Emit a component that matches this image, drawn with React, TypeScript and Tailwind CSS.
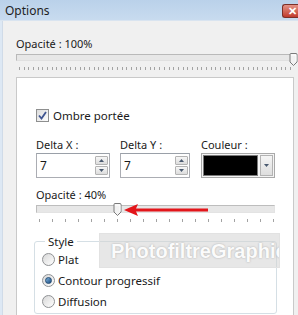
import React from "react";

function Ticks({ count }: { count: number }) {
  return (
    <div className="flex justify-between">
      {Array.from({ length: count }).map((_, i) => (
        <span key={i} className="block w-px h-[3px] bg-[#a3a3a3]" />
      ))}
    </div>
  );
}

function Thumb() {
  return (
    <svg width="9" height="13" viewBox="0 0 9 13" className="block">
      <path d="M1 1.5 Q1 0.5 2 0.5 H7 Q8 0.5 8 1.5 V9 L4.5 12.5 L1 9 Z" fill="#f2f2f2" stroke="#7a7a7a" strokeWidth="1" />
      <path d="M2 2 H7 V8.5" fill="none" stroke="#ffffff" strokeWidth="1" />
    </svg>
  );
}

function SpinButton({ up }: { up: boolean }) {
  return (
    <div className="w-[13px] h-[9px] border border-[#b3b3b3] bg-gradient-to-b from-[#f7f7f7] to-[#dcdcdc] rounded-[1px] flex items-center justify-center">
      <svg width="5" height="3" viewBox="0 0 5 3">
        {up ? <path d="M0 3 L2.5 0 L5 3 Z" fill="#4a5a70" /> : <path d="M0 0 L2.5 3 L5 0 Z" fill="#4a5a70" />}
      </svg>
    </div>
  );
}

function NumberInput({ value, width }: { value: string; width: string }) {
  return (
    <div className={"h-[25px] border border-[#abadb3] border-t-[#9aa0a8] bg-white flex items-center justify-between pl-[3px] pr-[1px] " + width}>
      <span className="text-[12px] text-[#1a1a1a]">{value}</span>
      <div className="flex flex-col gap-[1px]">
        <SpinButton up />
        <SpinButton up={false} />
      </div>
    </div>
  );
}

function Radio({ checked, label }: { checked?: boolean; label: string }) {
  return (
    <div className="h-[21px] flex items-center gap-[3px]">
      <span className="w-[13px] h-[13px] rounded-full border border-[#8f9194] bg-gradient-to-br from-[#d8d8d8] to-[#ffffff] flex items-center justify-center">
        {checked && <span className="w-[7px] h-[7px] rounded-full bg-gradient-to-br from-[#7fb2dd] to-[#1c4f82] border border-[#224a72]" />}
      </span>
      <span className="text-[11.5px] text-[#1a1a1a] leading-[15px]">{label}</span>
    </div>
  );
}

export default function App() {
  return (
    <div className="relative w-[298px] h-[315px] overflow-hidden bg-[#f0f0f0] font-['Noto_Sans',sans-serif] text-[#1a1a1a]">
      {/* Title bar */}
      <div className="h-[21px] bg-gradient-to-b from-[#bad1ea] to-[#c8dbef] flex items-center justify-between pl-[5px] border-b border-[#d9e4f0]">
        <span className="text-[12px] leading-[15px] text-[#1e1e1e]">Options</span>
        <div className="w-[16px] h-[14px] mt-[1px] rounded-l-[3px] border border-r-0 border-[#7d3028] bg-gradient-to-b from-[#e39286] to-[#c0392c] flex items-center pl-[5px] overflow-hidden">
          <span className="text-[11px] leading-none font-bold text-white">✕</span>
        </div>
      </div>

      <div className="flex h-full">
        <div className="w-[3px] bg-[#dde8f4] border-r border-[#d0dbe8]" />

        <div className="flex-1 pl-[13px]">
          <div className="mt-[15px] text-[11px] leading-[15px]">Opacité : 100%</div>

          {/* Slider 1 */}
          <div className="relative mt-[3px]">
            <div className="h-[7px] mr-[6px] bg-[#e7e7e7] border border-[#b9b9b9] border-b-[#e0e0e0] border-r-[#e0e0e0]" />
            <div className="absolute left-[273px] top-[-1px]">
              <Thumb />
            </div>
          </div>
          <div className="mt-[6px] pl-[3px] pr-[7px]">
            <Ticks count={59} />
          </div>

          {/* Panel */}
          <div className="mt-[7px] w-[278px] h-[260px] bg-white border border-[#c9c9c9] pl-[19px]">
            <div className="mt-[30px] flex items-center gap-[4px]">
              <span className="w-[13px] h-[13px] border border-[#8e8f8f] bg-gradient-to-br from-[#dcdcdc] to-[#fdfdfd] flex items-center justify-center">
                <svg width="9" height="9" viewBox="0 0 9 9">
                  <path d="M1 4.5 L3.5 7.5 L8 1" fill="none" stroke="#3f5490" strokeWidth="1.8" />
                </svg>
              </span>
              <span className="text-[11.5px] leading-[15px]">Ombre portée</span>
            </div>

            <div className="mt-[14px] flex">
              <div className="w-[84px]">
                <div className="text-[11px] leading-[15px]">Delta X :</div>
                <div className="mt-[1px]">
                  <NumberInput value="7" width="w-[74px]" />
                </div>
              </div>
              <div className="w-[81px]">
                <div className="text-[11px] leading-[15px]">Delta Y :</div>
                <div className="mt-[1px]">
                  <NumberInput value="7" width="w-[70px]" />
                </div>
              </div>
              <div>
                <div className="text-[11px] leading-[15px]">Couleur :</div>
                <div className="mt-[1px] w-[74px] h-[25px] border border-[#a9a9a9] bg-[#f4f4f4] flex items-center gap-[2px] px-[1px]">
                  <div className="w-[56px] h-[21px] border border-[#7a7a7a] bg-black" />
                  <div className="w-[13px] h-[21px] border border-[#b3b3b3] bg-gradient-to-b from-[#f5f5f5] to-[#dedede] flex items-center justify-center">
                    <svg width="5" height="3" viewBox="0 0 5 3">
                      <path d="M0 0 L2.5 3 L5 0 Z" fill="#4a5a70" />
                    </svg>
                  </div>
                </div>
              </div>
            </div>

            <div className="mt-[9px] text-[11px] leading-[15px]">Opacité : 40%</div>

            {/* Slider 2 */}
            <div className="relative mt-[3px] w-[239px]">
              <div className="h-[8px] bg-[#e7e7e7] border border-[#bdbdbd] border-b-[#e3e3e3] border-r-[#e3e3e3]" />
              <div className="absolute left-[77px] top-[-2px]">
                <Thumb />
              </div>
              <svg width="86" height="14" viewBox="0 0 86 14" className="absolute left-[88px] top-[-2px]">
                <path d="M0 7 L14 1 L12 5.5 H84 V8.5 H12 L14 13 Z" fill="#e3151a" />
              </svg>
            </div>
            <div className="mt-[6px] w-[239px] pl-[3px] pr-[1px]">
              <Ticks count={19} />
            </div>

            {/* Style group */}
            <fieldset className="mt-[12px] ml-[-2px] w-[243px] h-[80px] border border-[#d5dfe5] rounded-[3px] pl-[7px]">
              <legend className="ml-[3px] px-[3px] text-[11.5px] leading-[15px]">Style</legend>
              <Radio label="Plat" />
              <Radio checked label="Contour progressif" />
              <Radio label="Diffusion" />
            </fieldset>
          </div>
        </div>
      </div>

      {/* Watermark */}
      <div className="absolute left-[99px] top-[233px] w-[181px] h-[35px] bg-[#d4d4d4]/55 border border-[#e2e2e2] overflow-hidden flex items-center pl-[11px]">
        <span className="font-['Liberation_Sans',sans-serif] font-bold text-[20px] leading-none text-[#fbfbfb] whitespace-nowrap [text-shadow:0_0_2px_#a8a8a8]">
          PhotofiltreGraphic
        </span>
      </div>
    </div>
  );
}
